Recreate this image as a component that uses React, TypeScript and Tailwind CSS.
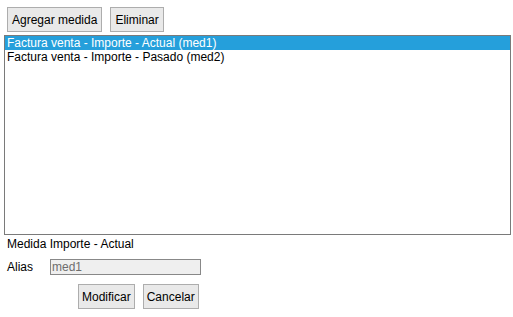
export default function App() {
  const rows = [
    "Factura venta - Importe - Actual (med1)",
    "Factura venta - Importe - Pasado (med2)",
  ];

  return (
    <div className="h-[317px] w-[513px] bg-white font-['Liberation_Sans',Arial,sans-serif] text-[12px] text-black">
      {/* Toolbar */}
      <div className="flex gap-2 pl-[7px] pt-[7px]">
        <button className="h-[25px] border border-[#adadad] bg-[#e9e9e9] px-[4px] leading-none">
          Agregar medida
        </button>
        <button className="h-[25px] border border-[#adadad] bg-[#e9e9e9] px-[4px] leading-none">
          Eliminar
        </button>
      </div>

      {/* List */}
      <div className="ml-[4px] mt-[3px] h-[200px] w-[507px] border border-[#7a7a7a] bg-white">
        {rows.map((row, i) => (
          <div
            key={row}
            className={`h-[14px] pl-[2px] leading-[14px] ${
              i === 0 ? "bg-[#259fdb] text-white" : ""
            }`}
          >
            {row}
          </div>
        ))}
      </div>

      {/* Edit form */}
      <div className="pl-[7px] pt-[2px] leading-[15px]">Medida Importe - Actual</div>
      <div className="mt-[6px] flex items-center">
        <span className="w-[50px] pl-[7px]">Alias</span>
        <input
          readOnly
          value="med1"
          className="h-[16px] w-[151px] border border-[#888] bg-[#efefef] px-[1px] text-[12px] leading-none text-[#6d6d6d] outline-none"
        />
      </div>
      <div className="mt-[8px] flex gap-2 pl-[78px]">
        <button className="h-[25px] border border-[#adadad] bg-[#e9e9e9] px-[3px] leading-none">
          Modificar
        </button>
        <button className="h-[25px] border border-[#adadad] bg-[#e9e9e9] px-[3px] leading-none">
          Cancelar
        </button>
      </div>
    </div>
  );
}
